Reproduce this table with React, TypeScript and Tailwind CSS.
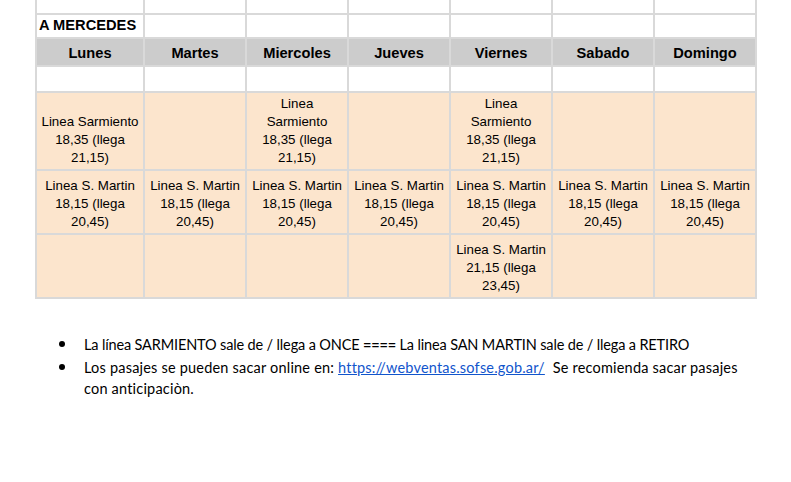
const days = ['Lunes', 'Martes', 'Miercoles', 'Jueves', 'Viernes', 'Sabado', 'Domingo'];

const sarmiento = ['Linea Sarmiento', '18,35 (llega', '21,15)'];
const sarmientoNarrow = ['Linea', 'Sarmiento', '18,35 (llega', '21,15)'];
const martin = ['Linea S. Martin', '18,15 (llega', '20,45)'];
const martinLate = ['Linea S. Martin', '21,15 (llega', '23,45)'];

const rowSarmiento: (string[] | null)[] = [sarmiento, null, sarmientoNarrow, null, sarmientoNarrow, null, null];
const rowMartin: (string[] | null)[] = [martin, martin, martin, martin, martin, martin, martin];
const rowLate: (string[] | null)[] = [null, null, null, null, martinLate, null, null];

function Cell({ lines, className = '' }: { lines?: string[] | null; className?: string }) {
  return (
    <div className={`flex flex-col items-center justify-end px-[2px] pb-[2px] text-center text-[13.33px] leading-[18px] text-black ${className}`}>
      {lines?.map((l, i) => (
        <span key={i} className="whitespace-nowrap">
          {l}
        </span>
      ))}
    </div>
  );
}

export default function App() {
  return (
    <div className="w-[791px] h-[482px] bg-white overflow-hidden" style={{ fontFamily: '"Liberation Sans", Arial, sans-serif' }}>
      {/* Schedule table */}
      <div className="ml-[35px] w-[722px] bg-[#d9d9d9] px-[2px] pb-[2px] grid grid-cols-[106px_repeat(6,100px)] grid-rows-[13px_22px_26px_24px_76px_62px_62px] gap-[2px]">
        {days.map((d) => (
          <div key={'top' + d} className="bg-white" />
        ))}

        <div className="bg-white flex items-end pl-[2px] pb-[3px] text-[14.67px] leading-[18px] font-bold text-black whitespace-nowrap">
          A MERCEDES
        </div>
        {days.slice(1).map((d) => (
          <div key={'sub' + d} className="bg-white" />
        ))}

        {days.map((d) => (
          <div key={d} className="bg-[#cccccc] flex items-end justify-center pb-[3px] text-[14.67px] leading-[18px] font-bold text-black">
            {d}
          </div>
        ))}

        {days.map((d) => (
          <div key={'empty' + d} className="bg-white" />
        ))}

        {rowSarmiento.map((c, i) => (
          <Cell key={'s' + i} lines={c} className="bg-[#fce5cd]" />
        ))}
        {rowMartin.map((c, i) => (
          <Cell key={'m' + i} lines={c} className="bg-[#fce5cd]" />
        ))}
        {rowLate.map((c, i) => (
          <Cell key={'l' + i} lines={c} className="bg-[#fce5cd]" />
        ))}
      </div>

      {/* Notes */}
      <ul className="mt-[35px] ml-[59px] flex flex-col gap-[2px] text-[14.5px] leading-[21px] text-black" style={{ fontFamily: 'Lato, "Open Sans", sans-serif' }}>
        <li className="flex">
          <span className="w-[25px] flex-shrink-0 pt-[7px]">
            <span className="block w-[6px] h-[6px] rounded-full bg-black" />
          </span>
          <span className="whitespace-nowrap tracking-[-0.15px]">
            La línea SARMIENTO sale de / llega a ONCE <b>====</b> La linea SAN MARTIN sale de / llega a RETIRO
          </span>
        </li>
        <li className="flex">
          <span className="w-[25px] flex-shrink-0 pt-[7px]">
            <span className="block w-[6px] h-[6px] rounded-full bg-black" />
          </span>
          <span className="flex flex-col tracking-[0.2px]">
            <span className="whitespace-nowrap">
              Los pasajes se pueden sacar online en:{' '}
              <a href="#" className="text-[#1155cc] underline">
                https://webventas.sofse.gob.ar/
              </a>
              {'\u00a0 '}Se recomienda sacar pasajes
            </span>
            <span>con anticipaciòn.</span>
          </span>
        </li>
      </ul>
    </div>
  );
}
